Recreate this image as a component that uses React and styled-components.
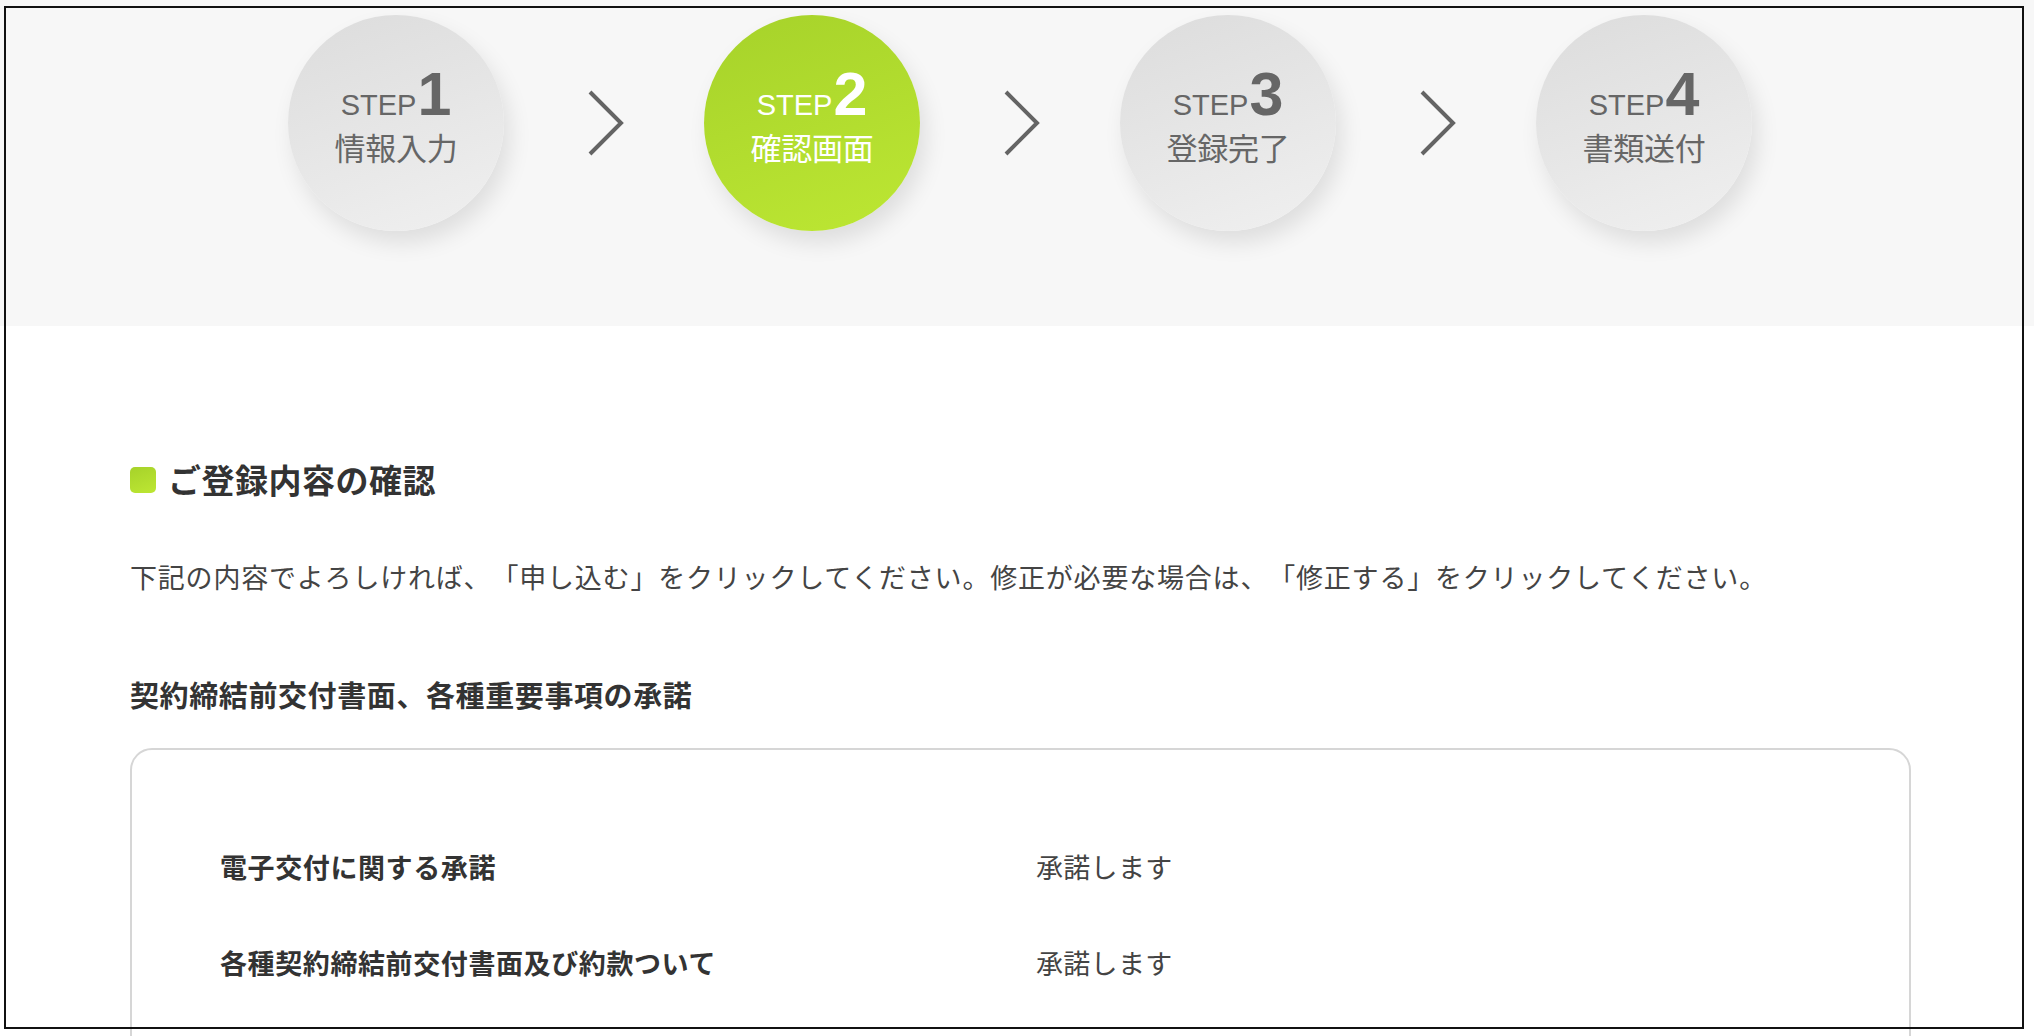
import styled, { createGlobalStyle } from 'styled-components';

const GlobalStyle = createGlobalStyle`
  html, body {
    margin: 0;
    padding: 0;
    background: #fff;
  }
  body {
    font-family: 'Noto Sans CJK JP', 'Liberation Sans', sans-serif;
    color: #333;
    text-spacing-trim: space-all;
  }
`;

const steps = [
  { num: 1, label: '情報入力' },
  { num: 2, label: '確認画面', active: true },
  { num: 3, label: '登録完了' },
  { num: 4, label: '書類送付' },
];

const rows = [
  { label: '電子交付に関する承諾', value: '承諾します' },
  { label: '各種契約締結前交付書面及び約款ついて', value: '承諾します' },
];

export default function App() {
  return (
    <>
      <GlobalStyle />
      <Page>
        <StepBand>
          <StepList>
            {steps.map((s, i) => (
              <StepItem key={s.num}>
                {i > 0 && (
                  <Chevron>
                    <svg width='37' height='68' viewBox='0 0 37 68'>
                      <polyline
                        points='3,3 34,34 3,65'
                        fill='none'
                        stroke='#646464'
                        strokeWidth='4'
                      />
                    </svg>
                  </Chevron>
                )}
                <Circle $active={s.active}>
                  <StepTitle>
                    <span className='word'>STEP</span>
                    <span className='num'>{s.num}</span>
                  </StepTitle>
                  <StepLabel>{s.label}</StepLabel>
                </Circle>
              </StepItem>
            ))}
          </StepList>
        </StepBand>

        <Main>
          <Heading>ご登録内容の確認</Heading>
          <Lead>
            下記の内容でよろしければ、「申し込む」をクリックしてください。修正が必要な場合は、「修正する」をクリックしてください。
          </Lead>
          <SubHeading>契約締結前交付書面、各種重要事項の承諾</SubHeading>
          <ConfirmBox>
            {rows.map((r) => (
              <Row key={r.label}>
                <RowLabel>{r.label}</RowLabel>
                <RowValue>{r.value}</RowValue>
              </Row>
            ))}
          </ConfirmBox>
        </Main>

        <Frame />
      </Page>
    </>
  );
}

const Page = styled.div`
  position: relative;
  width: 2034px;
  height: 1036px;
  overflow: hidden;
`;

const Frame = styled.div`
  position: absolute;
  left: 4px;
  top: 6px;
  width: 2016px;
  height: 1019px;
  border: 2px solid #111;
  pointer-events: none;
`;

const StepBand = styled.div`
  background: #f7f7f7;
  height: 326px;
  padding-top: 15px;
  box-sizing: border-box;
`;

const StepList = styled.div`
  display: flex;
  justify-content: center;
  padding-left: 6px;
`;

const StepItem = styled.div`
  display: flex;
  align-items: center;
`;

const Chevron = styled.div`
  width: 198px;
  display: flex;
  justify-content: center;
  padding-left: 2px;
`;

const Circle = styled.div`
  width: 216px;
  height: 216px;
  border-radius: 50%;
  display: flex;
  flex-direction: column;
  align-items: center;
  justify-content: center;
  padding-bottom: 16px;
  box-sizing: border-box;
  color: ${(p) => (p.$active ? '#fff' : '#666')};
  background: ${(p) =>
    p.$active
      ? 'linear-gradient(160deg, #a6d22a 0%, #bde733 100%)'
      : 'linear-gradient(160deg, #dcdcdc 0%, #f0f0f0 100%)'};
  box-shadow: 6px 12px 22px rgba(0, 0, 0, 0.1);
`;

const StepTitle = styled.div`
  display: flex;
  align-items: baseline;
  font-family: 'Liberation Sans', Arial, sans-serif;
  line-height: 1;

  .word {
    font-size: 29px;
  }

  .num {
    font-size: 61px;
    font-weight: 700;
    margin-left: 1px;
  }
`;

const StepLabel = styled.div`
  font-size: 31px;
  line-height: 1.2;
  margin-top: 3px;
  letter-spacing: -0.3px;
`;

const Main = styled.div`
  padding: 0 123px 0 130px;
`;

const Heading = styled.h2`
  margin: 128px 0 0;
  display: flex;
  align-items: center;
  gap: 12px;
  font-size: 33px;
  font-weight: 700;
  line-height: 51px;
  letter-spacing: 0.5px;
  color: #333;

  &::before {
    content: '';
    width: 26px;
    height: 26px;
    border-radius: 5px;
    background: linear-gradient(160deg, #a6d22a 0%, #bde733 100%);
  }
`;

const Lead = styled.p`
  margin: 52px 0 0;
  font-size: 27px;
  line-height: 40px;
  letter-spacing: 0.8px;
  color: #444;
`;

const SubHeading = styled.h3`
  margin: 76px 0 0;
  font-size: 29px;
  font-weight: 700;
  line-height: 42px;
  letter-spacing: 0.6px;
  color: #333;
`;

const ConfirmBox = styled.div`
  margin-top: 33px;
  border: 2px solid #d6d6d6;
  border-radius: 22px;
  padding: 97px 88px 120px;
  display: flex;
  flex-direction: column;
  gap: 56px;
`;

const Row = styled.div`
  display: grid;
  grid-template-columns: 816px 1fr;
  align-items: center;
`;

const RowLabel = styled.div`
  font-size: 27px;
  font-weight: 700;
  line-height: 40px;
  letter-spacing: 0.6px;
  color: #333;
`;

const RowValue = styled.div`
  font-size: 27px;
  line-height: 40px;
  letter-spacing: 0.3px;
  color: #444;
`;
